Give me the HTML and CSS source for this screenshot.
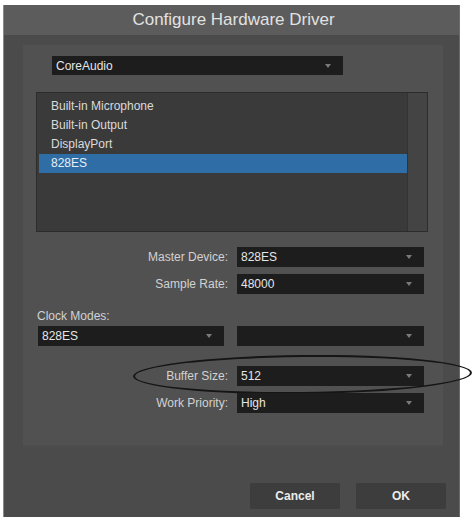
FILE: index.html
```html
<!DOCTYPE html>
<html lang="en">
<head>
  <meta charset="UTF-8">
  <title>Configure Hardware Driver</title>
  <link rel="stylesheet" href="styles.css">
</head>
<body>

  <div class="dialog">
    <div class="title-bar">Configure Hardware Driver</div>

    <div class="panel">
      <div class="select driver-select">CoreAudio<span class="arrow"></span></div>

      <div class="listbox">
        <div class="list-items">
          <div class="list-item">Built-in Microphone</div>
          <div class="list-item">Built-in Output</div>
          <div class="list-item">DisplayPort</div>
          <div class="list-item selected">828ES</div>
        </div>
        <div class="scrollbar"></div>
      </div>

      <div class="field-row first">
        <label>Master Device:</label>
        <div class="select">828ES<span class="arrow"></span></div>
      </div>
      <div class="field-row">
        <label>Sample Rate:</label>
        <div class="select">48000<span class="arrow"></span></div>
      </div>

      <div class="clock-label">Clock Modes:</div>
      <div class="clock-row">
        <div class="select clock-select">828ES<span class="arrow"></span></div>
        <div class="select"><span class="arrow"></span></div>
      </div>

      <div class="field-row buffer-row">
        <label>Buffer Size:</label>
        <div class="select">512<span class="arrow"></span></div>
        <div class="ring"></div>
      </div>
      <div class="field-row">
        <label>Work Priority:</label>
        <div class="select">High<span class="arrow"></span></div>
      </div>
    </div>

    <div class="buttons">
      <button class="btn">Cancel</button>
      <button class="btn">OK</button>
    </div>
  </div>

</body>
</html>
```

FILE: styles.css
```css
html, body {
  margin: 0;
  padding: 0;
  background: #ffffff;
  font-family: "Liberation Sans", Arial, sans-serif;
  overflow: hidden;
}

.dialog {
  margin: 5px 0 0 3px;
  width: 457px;
  height: 512px;
  background: #4b4b4b;
  border-left: 1px solid #8a8a8a;
  border-right: 1px solid #6a6a6a;
  box-sizing: border-box;
  position: relative;
}

.title-bar {
  height: 30px;
  background: #5c5c5c;
  color: #e2e2e2;
  font-size: 17px;
  text-align: center;
  line-height: 30px;
  padding-left: 4px;
}

.panel {
  margin: 10px 16px 0 19px;
  height: 401px;
  background: #515151;
  box-sizing: border-box;
  padding: 11px 15px 0 13px;
  border-bottom: 1px solid #4e4e4e;
}

.select {
  position: relative;
  height: 20px;
  background: #1d1d1d;
  color: #e6e6e6;
  font-size: 12px;
  line-height: 21px;
  padding-left: 4px;
  box-sizing: border-box;
}

.arrow {
  position: absolute;
  right: 12px;
  top: 8px;
  border-left: 3px solid transparent;
  border-right: 3px solid transparent;
  border-top: 4px solid #7a7a7a;
}

.driver-select {
  margin-left: 16px;
  width: 291px;
  height: 19px;
}

.listbox {
  display: flex;
  margin-top: 17px;
  height: 140px;
  background: #3a3a3a;
  border: 1px solid #2c2c2c;
  box-sizing: border-box;
}

.list-items {
  flex: 1;
  padding: 4px 0 0 2px;
}

.list-item {
  height: 19px;
  line-height: 19px;
  padding-left: 12px;
  font-size: 12px;
  color: #dadada;
}

.list-item.selected {
  background: #2f6da6;
  color: #e8eef5;
}

.scrollbar {
  width: 19px;
  background: #444444;
  border-left: 1px solid #333333;
}

.field-row {
  position: relative;
  display: flex;
  align-items: center;
  margin-top: 7px;
  padding-right: 4px;
}

.field-row.first {
  margin-top: 15px;
}

.field-row label {
  flex: 1;
  text-align: right;
  padding-right: 9px;
  font-size: 12px;
  color: #d2d2d2;
}

.field-row .select {
  width: 187px;
}

.clock-label {
  margin-top: 15px;
  padding-left: 1px;
  font-size: 12px;
  color: #d2d2d2;
}

.clock-row {
  display: flex;
  justify-content: space-between;
  margin-top: 3px;
  padding: 0 4px 0 2px;
}

.clock-row .select {
  width: 187px;
}

.clock-row .clock-select {
  width: 186px;
}

.buffer-row {
  margin-top: 19px;
  height: 21px;
}

.ring {
  position: absolute;
  left: 97px;
  right: -44px;
  top: -10px;
  bottom: -8px;
  border: 2px solid #151515;
  border-radius: 50%;
  transform: rotate(-0.6deg);
}

.buttons {
  display: flex;
  justify-content: flex-end;
  gap: 16px;
  margin-top: 37px;
  padding-right: 13px;
}

.btn {
  width: 90px;
  height: 26px;
  background: #3d3d3d;
  border: none;
  color: #ececec;
  font-family: "Liberation Sans", Arial, sans-serif;
  font-size: 12px;
  font-weight: bold;
}
```
